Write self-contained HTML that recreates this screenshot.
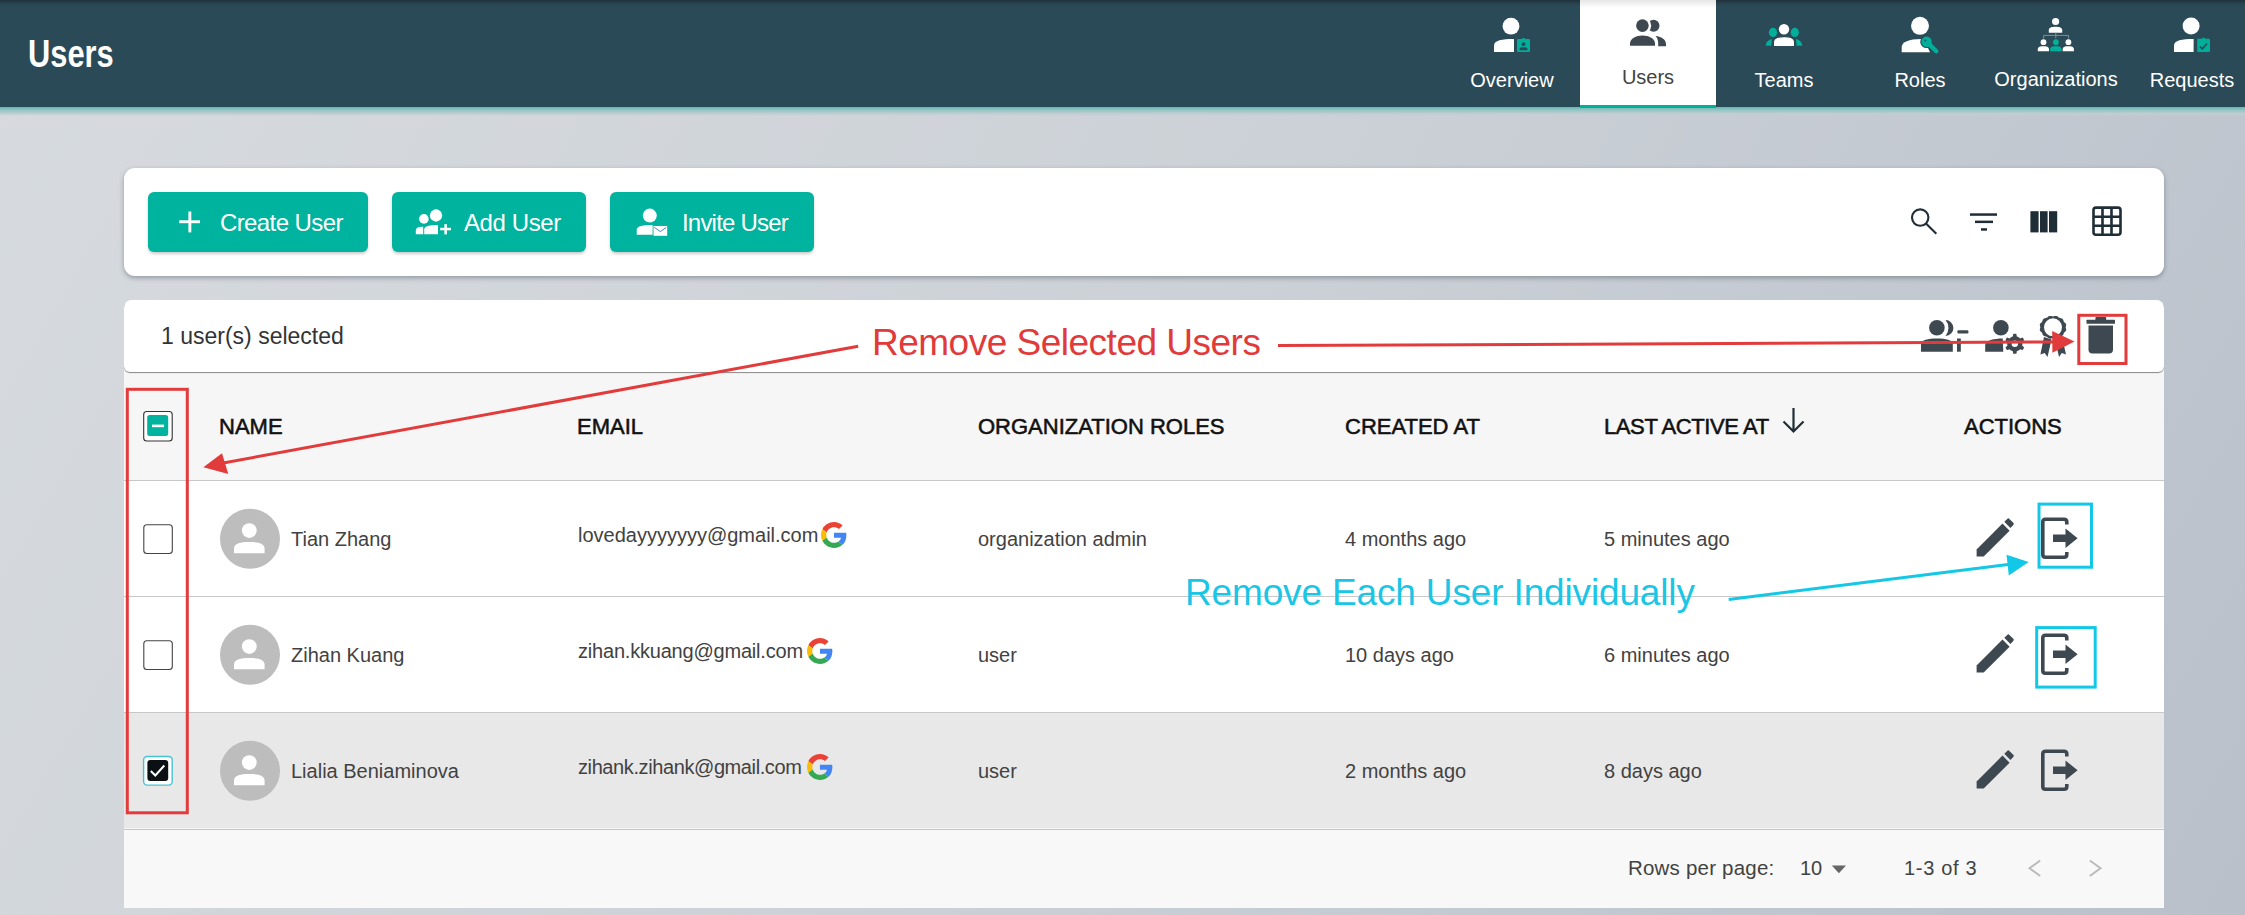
<!DOCTYPE html>
<html><head><meta charset="utf-8">
<style>
*{box-sizing:border-box;margin:0;padding:0}
html,body{width:2245px;height:915px;overflow:hidden}
body{position:relative;font-family:"Liberation Sans",sans-serif;background:linear-gradient(120deg,#d7dbdf 0%,#ccd1d7 50%,#b9c0ca 100%);color:#222}
.abs{position:absolute;white-space:nowrap;line-height:1}
#hdr{position:absolute;left:0;top:0;width:2245px;height:107px;background:linear-gradient(#1e2f3a 0px,#27414e 3px,#2b4a57 7px,#2b4a57 100%)}
#hdrline{position:absolute;left:0;top:107px;width:2245px;height:9px;background:linear-gradient(#62b9b2 0%,#8ec4c2 30%,#c2cdd1 75%,rgba(200,205,212,0) 100%)}
#title{left:28px;top:34px;font-size:39px;font-weight:700;color:#fff;transform:scaleX(0.79);transform-origin:0 0}
.tab{position:absolute;top:0;width:136px;height:105px;color:#fff;font-size:20px}
.tab .lbl{position:absolute;left:0;right:0;top:69.5px;text-align:center;line-height:1}
#tab-users{background:linear-gradient(#e6e6e6 0px,#fff 8px,#fff 100%);color:#444;border-bottom:3px solid #00b09b;height:108px}
.card{position:absolute;background:#fff}
#toolbar{left:124px;top:168px;width:2040px;height:108px;border-radius:11px;box-shadow:0 2px 5px rgba(50,60,75,.4)}
.btn{position:absolute;top:24px;height:60px;background:#00b39e;border-radius:6px;color:#fff;font-size:24px;box-shadow:0 2px 3px rgba(0,0,0,.2)}
.btn .t{position:absolute;top:19px;line-height:1}
#tablecard{left:124px;top:300px;width:2040px;height:608px;border-radius:8px 8px 0 0;background:#f7f7f7;overflow:hidden}
#selbar{position:absolute;left:0;top:0;width:2040px;height:72px;background:#fff;border-radius:0 0 6px 6px;box-shadow:0 1px 1px rgba(0,0,0,.45)}
#thead{position:absolute;left:0;top:72px;width:2040px;height:108px;background:#f6f6f6}
.row{position:absolute;left:0;width:2040px;height:116px;background:#fff;border-top:1px solid #c8c8c8}
.th{position:absolute;top:116px;font-size:22px;color:#111;line-height:1;white-space:nowrap;-webkit-text-stroke:0.55px #111}
.td{position:absolute;font-size:20px;color:#424242;line-height:1;white-space:nowrap}
.cb{position:absolute;left:19px;width:30px;height:30px;border:1.5px solid #555;border-radius:4px;background:#fff}
#ov{position:absolute;left:0;top:0;width:2245px;height:915px;pointer-events:none}
.ann{position:absolute;white-space:nowrap;line-height:1;font-size:37px}
</style></head>
<body>
<div id="hdr"></div>
<div id="hdrline"></div>
<div class="abs" id="title">Users</div>

<div class="tab" style="left:1444px"><div class="lbl">Overview</div></div>
<div class="tab" id="tab-users" style="left:1580px"><div class="lbl" style="top:66.5px">Users</div></div>
<div class="tab" style="left:1716px"><div class="lbl">Teams</div></div>
<div class="tab" style="left:1852px"><div class="lbl">Roles</div></div>
<div class="tab" style="left:1988px"><div class="lbl" style="top:68.5px">Organizations</div></div>
<div class="tab" style="left:2124px"><div class="lbl">Requests</div></div>

<div class="card" id="toolbar">
  <div class="btn" style="left:24px;width:220px"><span class="t" style="left:72px;letter-spacing:-0.6px">Create User</span></div>
  <div class="btn" style="left:268px;width:194px"><span class="t" style="left:72px;letter-spacing:-0.4px">Add User</span></div>
  <div class="btn" style="left:486px;width:204px"><span class="t" style="left:72px;letter-spacing:-0.8px">Invite User</span></div>
</div>

<div class="card" id="tablecard">
  <div id="thead"></div>
  <div id="selbar"><div class="abs" style="left:37px;top:25px;font-size:23px;color:#333">1 user(s) selected</div></div>
  <div class="th" style="left:95px">NAME</div>
  <div class="th" style="left:453px">EMAIL</div>
  <div class="th" style="left:854px">ORGANIZATION ROLES</div>
  <div class="th" style="left:1221px">CREATED AT</div>
  <div class="th" style="left:1480px;letter-spacing:-0.4px">LAST ACTIVE AT</div>
  <div class="th" style="left:1840px">ACTIONS</div>

  <div class="row" style="top:180px"></div>
  <div class="row" style="top:296px"></div>
  <div class="row" style="top:412px;background:#e8e8e8"></div>
  <div style="position:absolute;left:0;top:529px;width:2040px;height:79px;border-top:1px solid #c4c4c4;background:#f8f8f8"></div>

  <div class="td" style="left:167px;top:228.5px">Tian Zhang</div>
  <div class="td" style="left:454px;top:224.5px">lovedayyyyyyy@gmail.com</div>
  <div class="td" style="left:854px;top:228.5px">organization admin</div>
  <div class="td" style="left:1221px;top:228.5px">4 months ago</div>
  <div class="td" style="left:1480px;top:228.5px">5 minutes ago</div>

  <div class="td" style="left:167px;top:344.5px">Zihan Kuang</div>
  <div class="td" style="left:454px;top:340.5px;letter-spacing:-0.2px">zihan.kkuang@gmail.com</div>
  <div class="td" style="left:854px;top:344.5px">user</div>
  <div class="td" style="left:1221px;top:344.5px">10 days ago</div>
  <div class="td" style="left:1480px;top:344.5px">6 minutes ago</div>

  <div class="td" style="left:167px;top:460.5px">Lialia Beniaminova</div>
  <div class="td" style="left:454px;top:456.5px;letter-spacing:-0.4px">zihank.zihank@gmail.com</div>
  <div class="td" style="left:854px;top:460.5px">user</div>
  <div class="td" style="left:1221px;top:460.5px">2 months ago</div>
  <div class="td" style="left:1480px;top:460.5px">8 days ago</div>

  <div class="td" style="left:1504px;top:558px;font-size:20.5px;letter-spacing:0.2px">Rows per page:</div>
  <div class="td" style="left:1676px;top:558px">10</div>
  <div class="td" style="left:1780px;top:558px;letter-spacing:0.7px">1-3 of 3</div>
</div>

<div class="ann" style="left:872px;top:324px;color:#e03a3a;letter-spacing:-0.5px">Remove Selected Users</div>
<div class="ann" style="left:1185px;top:574px;color:#1ac6e6;letter-spacing:-0.15px">Remove Each User Individually</div>

<svg id="ov" width="2245" height="915" viewBox="0 0 2245 915">
<circle cx="1511" cy="26.2" r="8.4" fill="#ffffff"/>
<path fill="#ffffff" d="M1494.00 52.00 V45.50 C1494.00 40.30 1502.00 39.00 1514.00 39.00 V52.00 Z"/>
<path fill="#00ae9a" d="M1517 40.2 Q1517 39 1518.2 39 H1521.5 L1523.5 37.8 L1525.5 39 H1528.8 Q1530 39 1530 40.2 V50.8 Q1530 52 1528.8 52 H1518.2 Q1517 52 1517 50.8 Z"/>
<circle cx="1523.5" cy="44.2" r="1.9" fill="#2b4a57"/>
<path fill="#2b4a57" d="M1519.50 50.30 V48.95 C1519.50 47.60 1521.26 47.30 1523.50 47.30 C1525.74 47.30 1527.50 47.60 1527.50 48.95 V50.30 Z"/>
<circle cx="1653.5" cy="25.7" r="6.0" fill="#3d4850"/>
<circle cx="1642.4" cy="25.6" r="8.8" fill="#fff"/>
<circle cx="1642.4" cy="25.6" r="6.3" fill="#3d4850"/>
<path fill="#3d4850" d="M1630 45.8 V43.5 C1630 38.5 1636 35.4 1642.5 35.4 C1649 35.4 1655 38.5 1655 43.5 V45.8 Z"/>
<path fill="#3d4850" d="M1655.5 36 C1662 36.5 1666 40 1666 44 V46.3 H1658.2 V43.5 C1658.2 40.5 1657.5 38 1655.5 36 Z"/>
<ellipse cx="1773" cy="32.4" rx="4.1" ry="4.6" fill="#00ae9a"/>
<ellipse cx="1794.8" cy="32.4" rx="4.1" ry="4.6" fill="#00ae9a"/>
<path fill="#00ae9a" d="M1771.8 39 C1768 39.8 1765.8 42.5 1765.8 45.7 H1771.3 Z"/>
<path fill="#00ae9a" d="M1796 39 C1799.8 39.8 1802.2 42.5 1802.2 45.7 H1796.6 Z"/>
<circle cx="1784" cy="29.2" r="5.2" fill="#ffffff"/>
<path fill="#ffffff" d="M1774.00 45.90 V42.46 C1774.00 38.16 1778.40 37.30 1784.00 37.30 C1789.60 37.30 1794.00 38.16 1794.00 42.46 V45.90 Z"/>
<circle cx="1920" cy="25.8" r="9" fill="#ffffff"/>
<path fill="#ffffff" d="M1901.7 52.3 V47 C1901.7 42 1909 39 1921 39 H1924 L1930 52.3 Z"/>
<g stroke="#2b4a57" stroke-width="2.2" fill="#2b4a57"><circle cx="1926.6" cy="41.7" r="5.3"/><line x1="1928.5" y1="43.6" x2="1936.3" y2="51.3" stroke-width="6.6" stroke-linecap="round"/></g>
<g fill="#00ae9a"><circle cx="1926.6" cy="41.7" r="5.2"/><line x1="1928.5" y1="43.6" x2="1936.3" y2="51.3" stroke="#00ae9a" stroke-width="4.4" stroke-linecap="round"/></g>
<circle cx="1925.3" cy="40.6" r="1.1" fill="#1d6660"/>
<circle cx="2055.6" cy="21.5" r="3.6" fill="#ffffff"/>
<path fill="#ffffff" d="M2048.80 32.70 V30.30 C2048.80 27.30 2051.75 26.70 2055.50 26.70 C2059.25 26.70 2062.20 27.30 2062.20 30.30 V32.70 Z"/>
<g stroke="#7f9aa3" stroke-width="0.9" fill="none"><path d="M2043.6 38.4 V35.4 H2068.5 V38.4 M2055.8 32.7 V38.4"/></g>
<circle cx="2043.5" cy="42.2" r="2.9" fill="#ffffff"/>
<circle cx="2055.9" cy="42.2" r="2.9" fill="#00ae9a"/>
<circle cx="2068.4" cy="42.2" r="2.9" fill="#ffffff"/>
<path fill="#ffffff" d="M2037.80 51.30 V49.30 C2037.80 46.80 2040.26 46.30 2043.40 46.30 C2046.54 46.30 2049.00 46.80 2049.00 49.30 V51.30 Z"/>
<path fill="#00ae9a" d="M2050.10 51.30 V49.30 C2050.10 46.80 2052.63 46.30 2055.85 46.30 C2059.07 46.30 2061.60 46.80 2061.60 49.30 V51.30 Z"/>
<path fill="#ffffff" d="M2062.70 51.30 V49.30 C2062.70 46.80 2065.16 46.30 2068.30 46.30 C2071.44 46.30 2073.90 46.80 2073.90 49.30 V51.30 Z"/>
<circle cx="2191.1" cy="26.1" r="8.5" fill="#ffffff"/>
<path fill="#ffffff" d="M2174.00 52.10 V45.55 C2174.00 40.31 2181.84 39.00 2193.60 39.00 V52.10 Z"/>
<path fill="#00ae9a" d="M2197.2 40 Q2197.2 38.8 2198.4 38.8 H2201.8 L2203.6 37.6 L2205.4 38.8 H2208.8 Q2210 38.8 2210 40 V51 Q2210 52.1 2208.8 52.1 H2198.4 Q2197.2 52.1 2197.2 51 Z"/>
<polyline points="2199.8,46.5 2202.3,48.8 2207,43.6" fill="none" stroke="#2b4a57" stroke-width="1.6"/>
<g fill="#ffffff"><rect x="179.2" y="220.3" width="20.8" height="2.9"/><rect x="188.4" y="211.5" width="2.9" height="20.9"/></g>
<circle cx="423.9" cy="218.9" r="4.8" fill="#ffffff"/>
<circle cx="436" cy="215.5" r="7.6" fill="#00b39e"/>
<circle cx="436" cy="215.5" r="6.15" fill="#ffffff"/>
<path fill="#ffffff" d="M415.80 234.20 V230.50 C415.80 227.54 418.76 226.80 423.20 226.80 V234.20 Z"/>
<path fill="#ffffff" d="M424.20 234.20 V229.65 C424.20 226.01 429.72 225.10 438.00 225.10 V234.20 Z"/>
<g fill="#ffffff"><rect x="440.2" y="227.8" width="10.8" height="2.5"/><rect x="444.4" y="224.1" width="2.5" height="10.3"/></g>
<circle cx="649.8" cy="215.6" r="7" fill="#ffffff"/>
<path fill="#ffffff" d="M636.70 234.70 V229.85 C636.70 225.97 643.06 225.00 652.60 225.00 V234.70 Z"/>
<rect x="653.5" y="226" width="13.7" height="9.8" fill="#ffffff"/>
<polyline points="654.3,227.3 660.35,231.6 666.4,227.3" fill="none" stroke="#2a7cc7" stroke-width="0.9"/>
<g stroke="#1f2d36" stroke-width="2.1" fill="none"><circle cx="1920.2" cy="217.6" r="8.2"/><line x1="1926" y1="223.4" x2="1936.3" y2="233.7"/></g>
<g fill="#1f2d36"><rect x="1970" y="213.3" width="27" height="2.5"/><rect x="1975" y="220.6" width="18" height="2.5"/><rect x="1981" y="228.2" width="6" height="2.5"/></g>
<g fill="#1f2d36"><rect x="2030.4" y="211.2" width="8.2" height="21.2"/><rect x="2040" y="211.2" width="7.6" height="21.2"/><rect x="2049" y="211.2" width="8.2" height="21.2"/></g>
<g stroke="#1f2d36" fill="none" stroke-width="2.6"><rect x="2093.5" y="207.6" width="27" height="27.2" rx="2.5"/><path d="M2102.5 207.6 V234.8 M2111.5 207.6 V234.8 M2093.5 216.7 H2120.5 M2093.5 225.7 H2120.5"/></g>
<path fill="#3d4850" d="M1945.5 320.1 A7.8 7.8 0 0 1 1945.5 335.9 A12 12 0 0 0 1945.5 320.1 Z"/>
<circle cx="1936.9" cy="327.8" r="7.8" fill="#3d4850"/>
<path fill="#3d4850" d="M1921.00 351.70 V344.44 C1921.00 339.82 1928.00 338.50 1936.90 338.50 C1945.80 338.50 1952.80 339.82 1952.80 344.44 V351.70 Z"/>
<rect x="1957" y="338.5" width="3.8" height="13.2" fill="#3d4850"/>
<rect x="1957.4" y="330.3" width="11" height="3.2" rx="1" fill="#3d4850"/>
<circle cx="2000.9" cy="327.8" r="7.8" fill="#3d4850"/>
<path fill="#3d4850" d="M1985.2 351.7 V345 C1985.2 340.5 1994 338.5 2002.7 338.5 L2003.3 351.7 Z"/>
<path fill="#3d4850" fill-rule="evenodd" d="M2014.80,333.80 L2015.32,333.81 L2015.85,333.85 L2016.36,333.92 L2016.63,335.19 L2016.77,336.46 L2017.15,336.57 L2017.52,336.70 L2017.89,336.86 L2018.25,337.03 L2018.60,337.22 L2018.94,337.43 L2019.27,337.65 L2019.58,337.89 L2019.89,338.15 L2020.17,338.43 L2021.34,337.91 L2022.57,337.51 L2022.89,337.92 L2023.19,338.35 L2023.46,338.80 L2023.71,339.26 L2023.94,339.73 L2024.14,340.22 L2023.17,341.08 L2022.14,341.83 L2022.23,342.22 L2022.31,342.61 L2022.36,343.01 L2022.39,343.40 L2022.40,343.80 L2022.39,344.20 L2022.36,344.59 L2022.31,344.99 L2022.23,345.38 L2022.14,345.77 L2023.17,346.52 L2024.14,347.38 L2023.94,347.87 L2023.71,348.34 L2023.46,348.80 L2023.19,349.25 L2022.89,349.68 L2022.57,350.09 L2021.34,349.69 L2020.17,349.17 L2019.89,349.45 L2019.58,349.71 L2019.27,349.95 L2018.94,350.17 L2018.60,350.38 L2018.25,350.57 L2017.89,350.74 L2017.52,350.90 L2017.15,351.03 L2016.77,351.14 L2016.63,352.41 L2016.36,353.68 L2015.85,353.75 L2015.32,353.79 L2014.80,353.80 L2014.28,353.79 L2013.75,353.75 L2013.24,353.68 L2012.97,352.41 L2012.83,351.14 L2012.45,351.03 L2012.08,350.90 L2011.71,350.74 L2011.35,350.57 L2011.00,350.38 L2010.66,350.17 L2010.33,349.95 L2010.02,349.71 L2009.71,349.45 L2009.43,349.17 L2008.26,349.69 L2007.03,350.09 L2006.71,349.68 L2006.41,349.25 L2006.14,348.80 L2005.89,348.34 L2005.66,347.87 L2005.46,347.38 L2006.43,346.52 L2007.46,345.77 L2007.37,345.38 L2007.29,344.99 L2007.24,344.59 L2007.21,344.20 L2007.20,343.80 L2007.21,343.40 L2007.24,343.01 L2007.29,342.61 L2007.37,342.22 L2007.46,341.83 L2006.43,341.08 L2005.46,340.22 L2005.66,339.73 L2005.89,339.26 L2006.14,338.80 L2006.41,338.35 L2006.71,337.92 L2007.03,337.51 L2008.26,337.91 L2009.43,338.43 L2009.71,338.15 L2010.02,337.89 L2010.33,337.65 L2010.66,337.43 L2011.00,337.22 L2011.35,337.03 L2011.71,336.86 L2012.08,336.70 L2012.45,336.57 L2012.83,336.46 L2012.97,335.19 L2013.24,333.92 L2013.75,333.85 L2014.28,333.81 Z M2018.0,343.8 A3.2 3.2 0 1 0 2011.6,343.8 A3.2 3.2 0 1 0 2018.0,343.8 Z"/>
<path fill="#3d4850" fill-rule="evenodd" d="M2065.70,327.30 L2065.80,328.02 L2066.04,328.78 L2066.21,329.56 L2066.14,330.33 L2065.75,331.02 L2065.15,331.63 L2064.51,332.18 L2064.00,332.76 L2063.67,333.43 L2063.43,334.18 L2063.13,334.94 L2062.62,335.57 L2061.88,336.01 L2061.01,336.27 L2060.13,336.48 L2059.35,336.76 L2058.68,337.20 L2058.03,337.75 L2057.33,338.27 L2056.52,338.60 L2055.63,338.66 L2054.72,338.51 L2053.84,338.31 L2053.00,338.22 L2052.16,338.31 L2051.28,338.51 L2050.37,338.66 L2049.48,338.60 L2048.67,338.27 L2047.97,337.75 L2047.32,337.20 L2046.65,336.76 L2045.87,336.48 L2044.99,336.27 L2044.12,336.01 L2043.38,335.57 L2042.87,334.94 L2042.57,334.18 L2042.33,333.43 L2042.00,332.76 L2041.49,332.18 L2040.85,331.63 L2040.25,331.02 L2039.86,330.33 L2039.79,329.56 L2039.96,328.78 L2040.20,328.02 L2040.30,327.30 L2040.20,326.58 L2039.96,325.82 L2039.79,325.04 L2039.86,324.27 L2040.25,323.58 L2040.85,322.97 L2041.49,322.42 L2042.00,321.84 L2042.33,321.17 L2042.57,320.42 L2042.87,319.66 L2043.38,319.03 L2044.12,318.59 L2044.99,318.33 L2045.87,318.12 L2046.65,317.84 L2047.32,317.40 L2047.97,316.85 L2048.67,316.33 L2049.48,316.00 L2050.37,315.94 L2051.28,316.09 L2052.16,316.29 L2053.00,316.38 L2053.84,316.29 L2054.72,316.09 L2055.63,315.94 L2056.52,316.00 L2057.33,316.33 L2058.03,316.85 L2058.68,317.40 L2059.35,317.84 L2060.13,318.12 L2061.01,318.33 L2061.88,318.59 L2062.62,319.03 L2063.13,319.66 L2063.43,320.42 L2063.67,321.17 L2064.00,321.84 L2064.51,322.42 L2065.15,322.97 L2065.75,323.58 L2066.14,324.27 L2066.21,325.04 L2066.04,325.82 L2065.80,326.58 Z M2062,327.3 A9 9 0 1 0 2044,327.3 A9 9 0 1 0 2062,327.3 Z"/>
<path fill="#3d4850" d="M2044 337 L2040.4 354.5 L2044.7 353 L2047.5 357 L2051.5 339.5 Z"/>
<path fill="#3d4850" d="M2055 339.5 L2059 357 L2061.8 353 L2066 354.5 L2062 337 Z"/>
<g fill="#3d4850"><rect x="2086.5" y="319.7" width="28.5" height="4" rx="0.5"/><rect x="2095.4" y="317" width="10.8" height="3.5" rx="1"/><path d="M2088.5 325.6 H2113 V349.5 Q2113 353.5 2109 353.5 H2092.5 Q2088.5 353.5 2088.5 349.5 Z"/></g>
<rect x="143.7" y="411.5" width="28.5" height="29.5" rx="3" fill="#fff" stroke="#333" stroke-width="1.1"/>
<rect x="147.2" y="415" width="21" height="21" rx="2.5" fill="#00b39e"/>
<rect x="152" y="424.6" width="12" height="2.6" fill="#fff"/>
<rect x="143.8" y="524.7" width="28.5" height="28.8" rx="3" fill="#fff" stroke="#444" stroke-width="1.1"/>
<rect x="143.8" y="640.7" width="28.5" height="28.8" rx="3" fill="#fff" stroke="#444" stroke-width="1.1"/>
<rect x="143.6" y="756.5" width="28.6" height="28.6" rx="3.5" fill="#fff" stroke="#46c2d6" stroke-width="1.4"/>
<rect x="147.4" y="760" width="20.8" height="21" rx="3" fill="#0b1014"/>
<polyline points="150.8,771 155.3,775.5 164.3,765.5" fill="none" stroke="#fff" stroke-width="2"/>
<circle cx="250" cy="538.7" r="30" fill="#bdbdbd"/>
<circle cx="249.3" cy="530.6" r="7.4" fill="#ffffff"/>
<path fill="#ffffff" d="M234.00 553.30 V548.78 C234.00 543.13 240.73 542.00 249.30 542.00 C257.87 542.00 264.60 543.13 264.60 548.78 V553.30 Z"/>
<circle cx="250" cy="654.7" r="30" fill="#bdbdbd"/>
<circle cx="249.3" cy="646.6" r="7.4" fill="#ffffff"/>
<path fill="#ffffff" d="M234.00 669.30 V664.78 C234.00 659.13 240.73 658.00 249.30 658.00 C257.87 658.00 264.60 659.13 264.60 664.78 V669.30 Z"/>
<circle cx="250" cy="770.7" r="30" fill="#bdbdbd"/>
<circle cx="249.3" cy="762.6" r="7.4" fill="#ffffff"/>
<path fill="#ffffff" d="M234.00 785.30 V780.78 C234.00 775.13 240.73 774.00 249.30 774.00 C257.87 774.00 264.60 775.13 264.60 780.78 V785.30 Z"/>
<g transform="translate(821,522) scale(0.54)"><path fill="#EA4335" d="M24 9.5c3.54 0 6.71 1.22 9.21 3.6l6.85-6.85C35.9 2.38 30.47 0 24 0 14.62 0 6.51 5.38 2.56 13.22l7.98 6.19C12.43 13.72 17.74 9.5 24 9.5z"/><path fill="#4285F4" d="M46.98 24.55c0-1.57-.15-3.09-.38-4.55H24v9.02h12.94c-.58 2.96-2.26 5.48-4.78 7.18l7.73 6c4.51-4.18 7.09-10.36 7.09-17.65z"/><path fill="#FBBC05" d="M10.53 28.59c-.48-1.45-.76-2.99-.76-4.59s.27-3.14.76-4.59l-7.98-6.19C.92 16.46 0 20.12 0 24c0 3.88.92 7.54 2.56 10.78l7.97-6.19z"/><path fill="#34A853" d="M24 48c6.48 0 11.93-2.13 15.89-5.81l-7.73-6c-2.15 1.45-4.92 2.3-8.16 2.3-6.26 0-11.57-4.22-13.47-9.91l-7.98 6.19C6.51 42.62 14.62 48 24 48z"/></g>
<g transform="translate(807,638) scale(0.54)"><path fill="#EA4335" d="M24 9.5c3.54 0 6.71 1.22 9.21 3.6l6.85-6.85C35.9 2.38 30.47 0 24 0 14.62 0 6.51 5.38 2.56 13.22l7.98 6.19C12.43 13.72 17.74 9.5 24 9.5z"/><path fill="#4285F4" d="M46.98 24.55c0-1.57-.15-3.09-.38-4.55H24v9.02h12.94c-.58 2.96-2.26 5.48-4.78 7.18l7.73 6c4.51-4.18 7.09-10.36 7.09-17.65z"/><path fill="#FBBC05" d="M10.53 28.59c-.48-1.45-.76-2.99-.76-4.59s.27-3.14.76-4.59l-7.98-6.19C.92 16.46 0 20.12 0 24c0 3.88.92 7.54 2.56 10.78l7.97-6.19z"/><path fill="#34A853" d="M24 48c6.48 0 11.93-2.13 15.89-5.81l-7.73-6c-2.15 1.45-4.92 2.3-8.16 2.3-6.26 0-11.57-4.22-13.47-9.91l-7.98 6.19C6.51 42.62 14.62 48 24 48z"/></g>
<g transform="translate(807,754) scale(0.54)"><path fill="#EA4335" d="M24 9.5c3.54 0 6.71 1.22 9.21 3.6l6.85-6.85C35.9 2.38 30.47 0 24 0 14.62 0 6.51 5.38 2.56 13.22l7.98 6.19C12.43 13.72 17.74 9.5 24 9.5z"/><path fill="#4285F4" d="M46.98 24.55c0-1.57-.15-3.09-.38-4.55H24v9.02h12.94c-.58 2.96-2.26 5.48-4.78 7.18l7.73 6c4.51-4.18 7.09-10.36 7.09-17.65z"/><path fill="#FBBC05" d="M10.53 28.59c-.48-1.45-.76-2.99-.76-4.59s.27-3.14.76-4.59l-7.98-6.19C.92 16.46 0 20.12 0 24c0 3.88.92 7.54 2.56 10.78l7.97-6.19z"/><path fill="#34A853" d="M24 48c6.48 0 11.93-2.13 15.89-5.81l-7.73-6c-2.15 1.45-4.92 2.3-8.16 2.3-6.26 0-11.57-4.22-13.47-9.91l-7.98 6.19C6.51 42.62 14.62 48 24 48z"/></g>
<g transform="translate(0,0)"><path fill="#3d4850" d="M1976.6 556.6 V549.5 L2002.5 523.6 L2009.6 530.7 L1983.7 556.6 Z"/><path fill="#3d4850" d="M2004.3 521.8 L2007.2 518.9 Q2008.3 517.8 2009.4 518.9 L2013.3 522.8 Q2014.4 523.9 2013.3 525 L2010.4 527.9 Z"/></g>
<g transform="translate(0,0)"><path fill="none" stroke="#3d4850" stroke-width="3.6" d="M2066.8 524.5 V522 Q2066.8 519.3 2064 519.3 H2045.5 Q2042.8 519.3 2042.8 522 V554.5 Q2042.8 557.2 2045.5 557.2 H2064 Q2066.8 557.2 2066.8 554.5 V552"/><path fill="#3d4850" d="M2053 534.5 H2065.5 V528.5 L2077.6 538.3 L2065.5 548 V542 H2053 Z"/></g>
<g transform="translate(0,116)"><path fill="#3d4850" d="M1976.6 556.6 V549.5 L2002.5 523.6 L2009.6 530.7 L1983.7 556.6 Z"/><path fill="#3d4850" d="M2004.3 521.8 L2007.2 518.9 Q2008.3 517.8 2009.4 518.9 L2013.3 522.8 Q2014.4 523.9 2013.3 525 L2010.4 527.9 Z"/></g>
<g transform="translate(0,116)"><path fill="none" stroke="#3d4850" stroke-width="3.6" d="M2066.8 524.5 V522 Q2066.8 519.3 2064 519.3 H2045.5 Q2042.8 519.3 2042.8 522 V554.5 Q2042.8 557.2 2045.5 557.2 H2064 Q2066.8 557.2 2066.8 554.5 V552"/><path fill="#3d4850" d="M2053 534.5 H2065.5 V528.5 L2077.6 538.3 L2065.5 548 V542 H2053 Z"/></g>
<g transform="translate(0,232)"><path fill="#3d4850" d="M1976.6 556.6 V549.5 L2002.5 523.6 L2009.6 530.7 L1983.7 556.6 Z"/><path fill="#3d4850" d="M2004.3 521.8 L2007.2 518.9 Q2008.3 517.8 2009.4 518.9 L2013.3 522.8 Q2014.4 523.9 2013.3 525 L2010.4 527.9 Z"/></g>
<g transform="translate(0,232)"><path fill="none" stroke="#3d4850" stroke-width="3.6" d="M2066.8 524.5 V522 Q2066.8 519.3 2064 519.3 H2045.5 Q2042.8 519.3 2042.8 522 V554.5 Q2042.8 557.2 2045.5 557.2 H2064 Q2066.8 557.2 2066.8 554.5 V552"/><path fill="#3d4850" d="M2053 534.5 H2065.5 V528.5 L2077.6 538.3 L2065.5 548 V542 H2053 Z"/></g>
<g stroke="#1f2d36" stroke-width="2.2" fill="none"><path d="M1793.5 408 V431.5 M1783.5 421.5 L1793.5 431.5 L1803.5 421.5"/></g>
<polygon points="1831.8,865.5 1846,865.5 1838.9,873.3" fill="#666"/>
<g stroke="#bbb" stroke-width="2" fill="none"><polyline points="2040.2,860.5 2029.5,868.3 2040.2,876"/><polyline points="2089.8,860.5 2100.5,868.3 2089.8,876"/></g>
<rect x="127.3" y="389.3" width="60" height="423.5" fill="none" stroke="#e23b3b" stroke-width="3"/>
<rect x="2078.8" y="315.3" width="47.2" height="48.2" fill="none" stroke="#e23b3b" stroke-width="3"/>
<line x1="858.2" y1="346.2" x2="215" y2="464.5" stroke="#e23b3b" stroke-width="3"/>
<polygon points="203.4,467.2 222,453.2 228.3,474" fill="#e23b3b"/>
<line x1="1278" y1="345.5" x2="2055" y2="342" stroke="#e23b3b" stroke-width="3"/>
<polygon points="2074.5,341.6 2052.2,331 2052.4,352.8" fill="#e23b3b"/>
<rect x="2039" y="504.1" width="52.5" height="63.1" fill="none" stroke="#12c8e6" stroke-width="3"/>
<rect x="2036.7" y="627.6" width="58.5" height="59.5" fill="none" stroke="#12c8e6" stroke-width="3"/>
<line x1="1728.7" y1="599.5" x2="2012" y2="564" stroke="#12c8e6" stroke-width="3"/>
<polygon points="2028.7,561.9 2006.5,554.7 2008.8,575.4" fill="#12c8e6"/>
</svg>
</body></html>
